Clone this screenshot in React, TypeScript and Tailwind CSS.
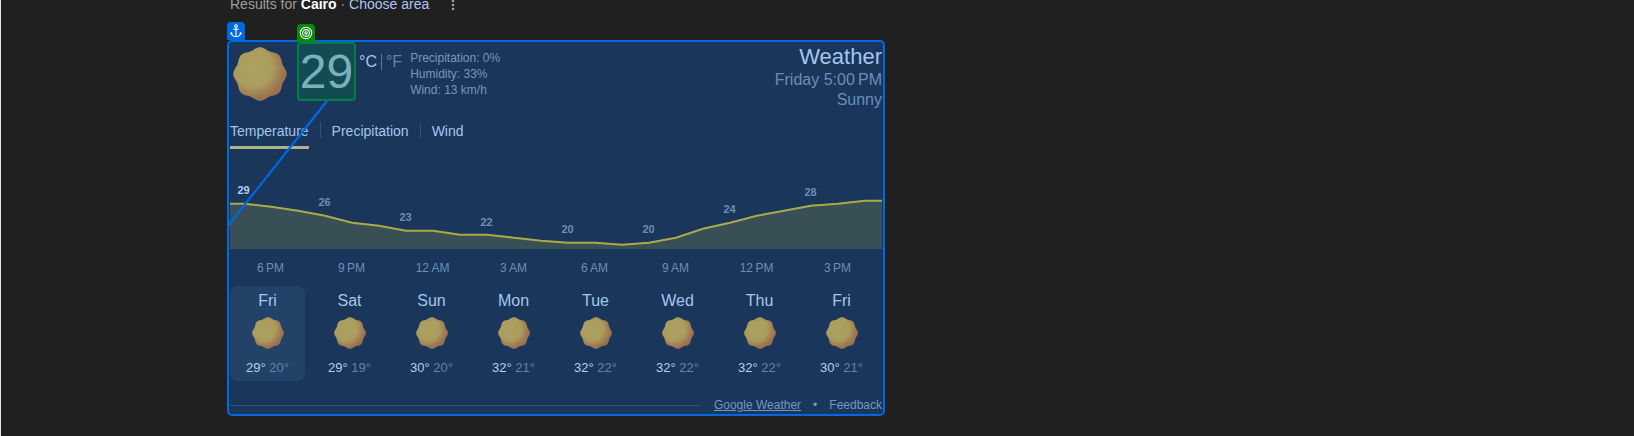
type Reading = { x: number; y: number };

const CURVE: Reading[] = [
  163, 166, 170, 175, 182, 185, 190, 190, 194, 194, 197, 200, 202, 202, 204, 202, 197, 188, 182, 175, 170, 165, 163, 160,
].map((y, i) => ({ x: 14 + i * 27, y: y - 150 }));

const LABELS = [29, 26, 23, 22, 20, 20, 24, 28];
const LABEL_Y = [4, 16, 31, 36, 43, 43, 23, 6];
const HOURS = ["6\u202fPM", "9\u202fPM", "12\u202fAM", "3\u202fAM", "6\u202fAM", "9\u202fAM", "12\u202fPM", "3\u202fPM"];
const DAYS: [string, number, number][] = [
  ["Fri", 29, 20],
  ["Sat", 29, 19],
  ["Sun", 30, 20],
  ["Mon", 32, 21],
  ["Tue", 32, 22],
  ["Wed", 32, 22],
  ["Thu", 32, 22],
  ["Fri", 30, 21],
];

const sunOutline = Array.from({ length: 120 }, (_, i) => {
  const a = (i / 120) * Math.PI * 2;
  const r = 22.8 + 1 * Math.cos(8 * a);
  return `${(24 + r * Math.sin(a)).toFixed(2)},${(24 - r * Math.cos(a)).toFixed(2)}`;
}).join(" ");

function Sun({ className, id }: { className: string; id: string }) {
  return (
    <svg viewBox="0 0 48 48" className={className} role="img" aria-label="Sunny">
      <defs>
        <radialGradient id={id} cx="0.38" cy="0.38" r="0.64">
          <stop offset="0" stopColor="#aca163" />
          <stop offset="0.55" stopColor="#ab9d5d" />
          <stop offset="0.9" stopColor="#9d724f" />
          <stop offset="1" stopColor="#9a6f4e" />
        </radialGradient>
      </defs>
      <polygon points={sunOutline} fill={`url(#${id})`} />
    </svg>
  );
}

function Chart() {
  const line = `0,${CURVE[0].y} ` + CURVE.map((p) => `${p.x},${p.y}`).join(" ") + ` 652,${CURVE[23].y}`;
  return (
    <svg viewBox="0 -30 652 90" className="block h-auto w-full" role="img" aria-label="Hourly temperature">
      <polygon points={`0,59 ${line} 652,59`} fill="#374f55" />
      <polyline points={line} transform="translate(0 0.7)" fill="none" stroke="#acaa48" strokeWidth="2" />
      {LABELS.map((t, i) => (
        <text
          key={i}
          x={13.5 + i * 81}
          y={LABEL_Y[i]}
          textAnchor="middle"
          className={i === 0 ? "fill-[#b0d0f4] text-[11px] font-bold" : "fill-[#6b8fb9] text-[11px] font-bold"}
        >
          {t}
        </text>
      ))}
    </svg>
  );
}

export default function App() {
  return (
    <main className="min-h-screen border-l border-[#e8e8e8] bg-[#202020] pl-[226px] font-['Liberation_Sans',Arial,sans-serif]">
      <div className="flex h-10 w-full max-w-[658px] flex-col">
        <div className="-mt-1 flex items-center pl-[3px] text-sm leading-4 text-[#9e9e9e]">
          <span>
            Results for <b className="text-white">Cairo</b> ·{" "}
            <a href="#area" className="text-[#a8c7fa]">Choose area</a>
          </span>
          <button aria-label="More options" className="ml-4">
            <svg viewBox="0 0 16 16" className="size-4" fill="currentColor">
              <circle cx="8" cy="5" r="1.3" />
              <circle cx="8" cy="9" r="1.3" />
              <circle cx="8" cy="13" r="1.3" />
            </svg>
          </button>
        </div>
      </div>

      <section className="relative w-full max-w-[658px] rounded-[5px] border-2 border-[#0068e0] bg-[#1a365a] px-px text-[#a4c6ee]">
        <div className="absolute -top-5 -left-0.5 flex h-[18px] w-[18px] items-center justify-center rounded-t bg-[#0068e0] text-white">
          <svg viewBox="0 0 14 14" className="size-3.5" fill="none" stroke="currentColor" strokeWidth="1.1">
            <circle cx="7" cy="2" r="1.3" />
            <path d="M7 3.3V12.8M4.3 5.2H9.7M2.2 9C2.6 11.4 4.6 12.6 7 12.8C9.4 12.6 11.4 11.4 11.8 9" />
            <path d="M1.1 10.3L2 7.8L4 9.6ZM12.9 10.3L12 7.8L10 9.6Z" fill="currentColor" stroke="none" />
          </svg>
        </div>
        <svg viewBox="0 0 110 200" className="pointer-events-none absolute top-0 -left-0.5 z-10 h-[200px] w-[110px]">
          <line x1="0" y1="185" x2="100" y2="59" stroke="#0068e0" strokeWidth="2.3" />
        </svg>

        <header className="flex justify-between">
          <div className="flex">
            <Sun id="sun-now" className="mt-[5px] ml-[3px] size-[54px]" />
            <div className="relative ml-2.5 h-[59px] w-[59px] rounded border-2 border-[#008040] bg-[#124b52] text-center text-5xl leading-[55px] text-[#7ab0bc]">
              <div className="absolute -top-5 -left-0.5 flex h-[18px] w-[18px] items-center justify-center rounded-t bg-[#068a0c] text-white">
                <svg viewBox="0 0 14 14" className="size-3.5" fill="none" stroke="currentColor" strokeWidth="1.1">
                  <circle cx="7" cy="7" r="5.7" />
                  <circle cx="7" cy="7" r="3.4" />
                  <circle cx="7" cy="7" r="1.2" />
                </svg>
              </div>
              <span className="flex justify-center">29</span>
            </div>
            <div className="mt-[11px] ml-[3px] flex h-[18px] items-center text-base leading-[18px]">
              <button>°C</button>
              <span className="mx-1 h-4 w-px bg-[#547aa5]" />
              <button className="text-[#6084ae]">°F</button>
            </div>
            <div className="mt-2 ml-2 text-xs leading-4 text-[#7697c0]">
              <p>Precipitation: 0%</p>
              <p>Humidity: 33%</p>
              <p>Wind: 13 km/h</p>
            </div>
          </div>
          <div className="text-right text-base leading-5 text-[#6b8fb9]">
            <h1 className="-mb-0.5 text-[22px] leading-[30px] text-[#a4c6ee]">Weather</h1>
            <p>Friday 5:00{"\u202f"}PM</p>
            <p>Sunny</p>
          </div>
        </header>

        <nav className="mt-3 flex h-7 items-start text-sm leading-[18px]">
          <button className="border-b-[3px] border-[#adb486] pb-1.5">Temperature</button>
          <span className="mx-[11px] h-4 w-px bg-[#315277]" />
          <button>Precipitation</button>
          <span className="mx-[11px] h-4 w-px bg-[#315277]" />
          <button>Wind</button>
        </nav>

        <div className="mt-2.5">
          <Chart />
        </div>
        <div className="flex pt-2 pr-1 text-xs leading-5 text-[#6b8fb9]">
          {HOURS.map((h) => (
            <span key={h} className="flex-1 text-center">{h}</span>
          ))}
        </div>

        <div className="mt-2 grid grid-cols-8 gap-x-[7px] pr-[3px]">
          {DAYS.map(([day, hi, lo], i) => (
            <button
              key={i}
              className={
                i === 0
                  ? "flex h-[95px] flex-col items-center rounded-lg bg-[#234268] pt-[5px]"
                  : "flex h-[95px] flex-col items-center rounded-lg pt-[5px]"
              }
            >
              <span className="text-base leading-5">{day}</span>
              <Sun id={`sun-${i}`} className="mt-1.5 size-8" />
              <span className="mt-[11px] text-[13px] leading-4">
                <b className="font-medium text-[#b0d0f4]">{hi}°</b> <span className="text-[#6084ae]">{lo}°</span>
              </span>
            </button>
          ))}
        </div>

        <footer className="mt-4 flex items-center pb-px text-xs leading-4 text-[#7697c0]">
          <span className="mr-3.5 h-px flex-1 bg-[#315277]" />
          <a href="#weather" className="underline">Google Weather</a>
          <span className="mx-3">•</span>
          <a href="#feedback">Feedback</a>
        </footer>
      </section>
    </main>
  );
}
